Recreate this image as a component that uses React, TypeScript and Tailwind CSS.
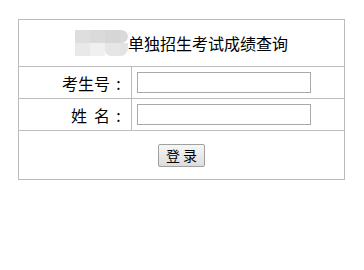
export default function App() {
  return (
    <div className="min-h-[270px] bg-white pt-[19px] pl-[18px]" style={{ fontFamily: '"Noto Sans CJK SC", "Noto Sans", sans-serif' }}>
      <div className="w-[327px] border border-[#bcbcbc] text-black">
        {/* Title */}
        <div className="flex h-[47px] items-center justify-center border-b border-[#bcbcbc]">
          <div className="flex h-[26px] w-[53px] flex-col">
            <div className="flex h-[13px]">
              <div className="w-[15px] bg-[#dedede]" />
              <div className="w-[15px] bg-[#dadada]" />
              <div className="w-[15px] bg-[#d6d6d6]" />
              <div className="w-[8px] rounded-r-full bg-[#d9d9d9]" />
            </div>
            <div className="flex h-[13px]">
              <div className="w-[15px] bg-[#e9e9e9]" />
              <div className="w-[15px] bg-[#f0f0f0]" />
              <div className="w-[15px] rounded-bl-md bg-[#e6e6e6]" />
              <div className="w-[8px] rounded-br-full bg-[#e3e3e3]" />
            </div>
          </div>
          <span className="text-[16px] leading-none">单独招生考试成绩查询</span>
        </div>

        {/* 考生号 */}
        <div className="flex h-[32px] border-b border-[#bcbcbc]">
          <div className="flex w-[113px] items-center justify-end border-r border-[#bcbcbc] pr-[4px] text-[16px]">
            <span>考生号</span>
            <span className="w-[17px] text-center">:</span>
          </div>
          <div className="flex items-center pl-[5px]">
            <input type="text" className="h-[21px] w-[174px] border border-[#a9a9a9] bg-white outline-none" />
          </div>
        </div>

        {/* 姓名 */}
        <div className="flex h-[32px] border-b border-[#bcbcbc]">
          <div className="flex w-[113px] items-center justify-end border-r border-[#bcbcbc] pr-[4px] text-[16px]">
            <span>姓</span>
            <span className="ml-[7px]">名</span>
            <span className="w-[17px] text-center">:</span>
          </div>
          <div className="flex items-center pl-[5px]">
            <input type="text" className="h-[21px] w-[174px] border border-[#a9a9a9] bg-white outline-none" />
          </div>
        </div>

        {/* Button */}
        <div className="flex h-[48px] items-center justify-center">
          <button className="h-[23px] w-[47px] rounded-[2px] border border-[#a0a0a0] bg-gradient-to-b from-[#f6f6f6] to-[#dddddd] text-[14px] leading-none text-black">
            登 录
          </button>
        </div>
      </div>
    </div>
  );
}
